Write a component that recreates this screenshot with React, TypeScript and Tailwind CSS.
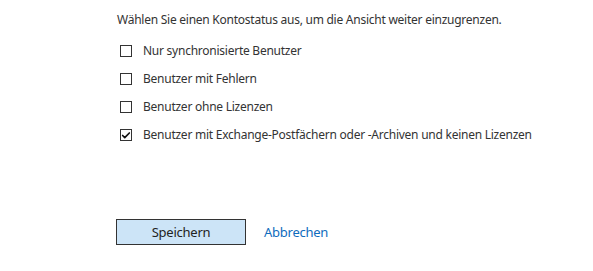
import { Check } from "lucide-react"

const options = [
    { label: "Nur synchronisierte Benutzer", checked: false },
    { label: "Benutzer mit Fehlern", checked: false },
    { label: "Benutzer ohne Lizenzen", checked: false },
    { label: "Benutzer mit Exchange-Postfächern oder -Archiven und keinen Lizenzen", checked: true },
]

const App = () => {
    return (
        <div className="w-[593px] h-[271px] bg-white text-[#333333] text-[12px] tracking-[-0.25px] leading-[18px]" style={{ fontFamily: '"Segoe UI", "Noto Sans", sans-serif' }}>
            <div className="pl-[117px] pt-[11px]">
                <p>Wählen Sie einen Kontostatus aus, um die Ansicht weiter einzugrenzen.</p>
                <ul className="mt-[13px] flex flex-col gap-[10px] pl-[3px]">
                    {options.map((o) => (
                        <li key={o.label} className="flex items-center h-[18px] gap-[11px]">
                            <span className="w-[12px] h-[12px] border border-[#333333] flex items-center justify-center">
                                {o.checked && <Check className="w-[11px] h-[11px]" strokeWidth={4} color="#111" />}
                            </span>
                            <span>{o.label}</span>
                        </li>
                    ))}
                </ul>
                <div className="mt-[75px] -ml-[1px] flex items-center gap-[18px]">
                    <button className="w-[130px] h-[26px] bg-[#cce4f7] border border-[#333333] text-[#222] text-[13px]">Speichern</button>
                    <a className="text-[#0f6cbd] text-[13px] cursor-pointer">Abbrechen</a>
                </div>
            </div>
        </div>
    )
}

export default App
